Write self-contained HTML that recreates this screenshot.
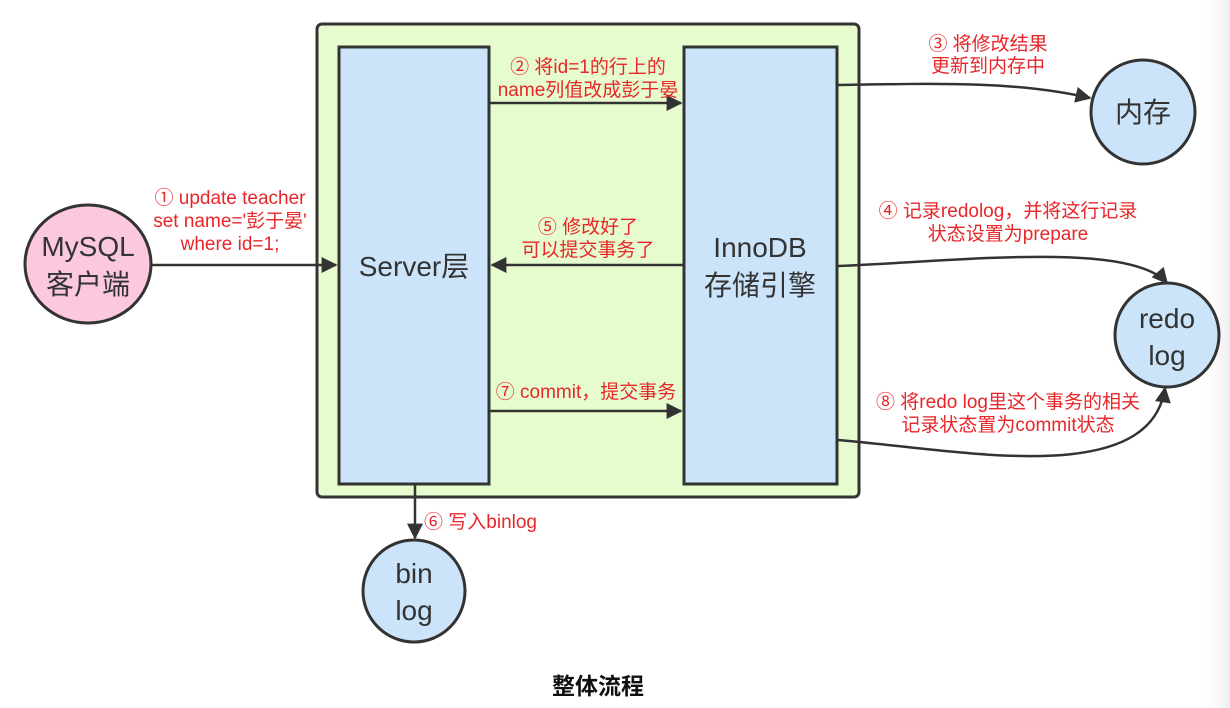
<!DOCTYPE html>
<html><head><meta charset="utf-8"><style>
html,body{margin:0;padding:0;width:1230px;height:708px;overflow:hidden;background:#fff}
svg{display:block}
text{font-family:"Liberation Sans","Noto Sans CJK SC",sans-serif}
.r{fill:#e8262a;font-size:19px}
.d{fill:#333;font-size:28px}
</style></head><body>
<svg width="1230" height="708" viewBox="0 0 1230 708" xmlns="http://www.w3.org/2000/svg">
<defs>
<linearGradient id="g" x1="0" x2="1" y1="0" y2="0"><stop offset="0" stop-color="#fff" stop-opacity="0"/><stop offset="1" stop-color="#eeeeee"/></linearGradient>
<marker id="b" viewBox="0 0 10 10" refX="9" refY="5" markerWidth="22" markerHeight="16" markerUnits="userSpaceOnUse" orient="auto"><path d="M0,0 L10,5 L0,10 z" fill="#333"/></marker>
</defs>
<rect x="1195" y="0" width="35" height="708" fill="url(#g)"/>
<rect x="317" y="24" width="542" height="473" rx="5" fill="#e6fcce" stroke="#333" stroke-width="3"/>
<rect x="339" y="47" width="150" height="437" fill="#cce4fa" stroke="#333" stroke-width="3"/>
<rect x="684" y="47" width="153" height="437" fill="#cce4fa" stroke="#333" stroke-width="3"/>
<text class="d" x="414" y="276" text-anchor="middle">Server层</text>
<text class="d" x="760" y="257" text-anchor="middle">InnoDB</text>
<text class="d" x="760" y="295" text-anchor="middle">存储引擎</text>
<ellipse cx="88" cy="264" rx="63" ry="59" fill="#fbc8e0" stroke="#333" stroke-width="3"/>
<text class="d" x="88" y="256" text-anchor="middle">MySQL</text>
<text class="d" x="88" y="294" text-anchor="middle">客户端</text>
<line x1="152" y1="265" x2="336" y2="265" stroke="#333" stroke-width="2.5" marker-end="url(#b)"/>
<text class="r" x="230" y="204" text-anchor="middle">① update teacher</text>
<text class="r" x="230" y="227" text-anchor="middle">set name='彭于晏'</text>
<text class="r" x="230" y="250" text-anchor="middle">where id=1;</text>
<line x1="490" y1="103" x2="681" y2="103" stroke="#333" stroke-width="2.5" marker-end="url(#b)"/>
<text class="r" x="588" y="73" text-anchor="middle">② 将id=1的行上的</text>
<text class="r" x="588" y="96" text-anchor="middle">name列值改成彭于晏</text>
<line x1="683" y1="265" x2="492" y2="265" stroke="#333" stroke-width="2.5" marker-end="url(#b)"/>
<text class="r" x="588" y="233" text-anchor="middle">⑤ 修改好了</text>
<text class="r" x="588" y="256" text-anchor="middle">可以提交事务了</text>
<line x1="490" y1="411" x2="681" y2="411" stroke="#333" stroke-width="2.5" marker-end="url(#b)"/>
<text class="r" x="586" y="398" text-anchor="middle">⑦ commit，提交事务</text>
<line x1="415" y1="485" x2="415" y2="538" stroke="#333" stroke-width="2.5" marker-end="url(#b)"/>
<text class="r" x="424" y="528">⑥ 写入binlog</text>
<circle cx="414" cy="591" r="51" fill="#cce4fa" stroke="#333" stroke-width="3"/>
<text class="d" x="414" y="583" text-anchor="middle">bin</text>
<text class="d" x="414" y="620" text-anchor="middle">log</text>
<path d="M838,85 C950,83 1020,82 1090,98" fill="none" stroke="#333" stroke-width="2.5" marker-end="url(#b)"/>
<text class="r" x="988" y="50" text-anchor="middle">③ 将修改结果</text>
<text class="r" x="988" y="72" text-anchor="middle">更新到内存中</text>
<circle cx="1143" cy="112" r="52" fill="#cce4fa" stroke="#333" stroke-width="3"/>
<text class="d" x="1143" y="122" text-anchor="middle">内存</text>
<path d="M838,266 C950,262 1130,240 1167,283" fill="none" stroke="#333" stroke-width="2.5" marker-end="url(#b)"/>
<text class="r" x="1008" y="217" text-anchor="middle">④ 记录redolog，并将这行记录</text>
<text class="r" x="1008" y="240" text-anchor="middle">状态设置为prepare</text>
<path d="M838,440 C960,450 1150,490 1165,388" fill="none" stroke="#333" stroke-width="2.5" marker-end="url(#b)"/>
<text class="r" x="1008" y="408" text-anchor="middle">⑧ 将redo log里这个事务的相关</text>
<text class="r" x="1008" y="431" text-anchor="middle">记录状态置为commit状态</text>
<circle cx="1167" cy="335" r="52" fill="#cce4fa" stroke="#333" stroke-width="3"/>
<text class="d" x="1167" y="328" text-anchor="middle">redo</text>
<text class="d" x="1167" y="365" text-anchor="middle">log</text>
<text x="598" y="694" text-anchor="middle" style="font-size:23px;font-weight:bold;fill:#111">整体流程</text>
</svg>
</body></html>
